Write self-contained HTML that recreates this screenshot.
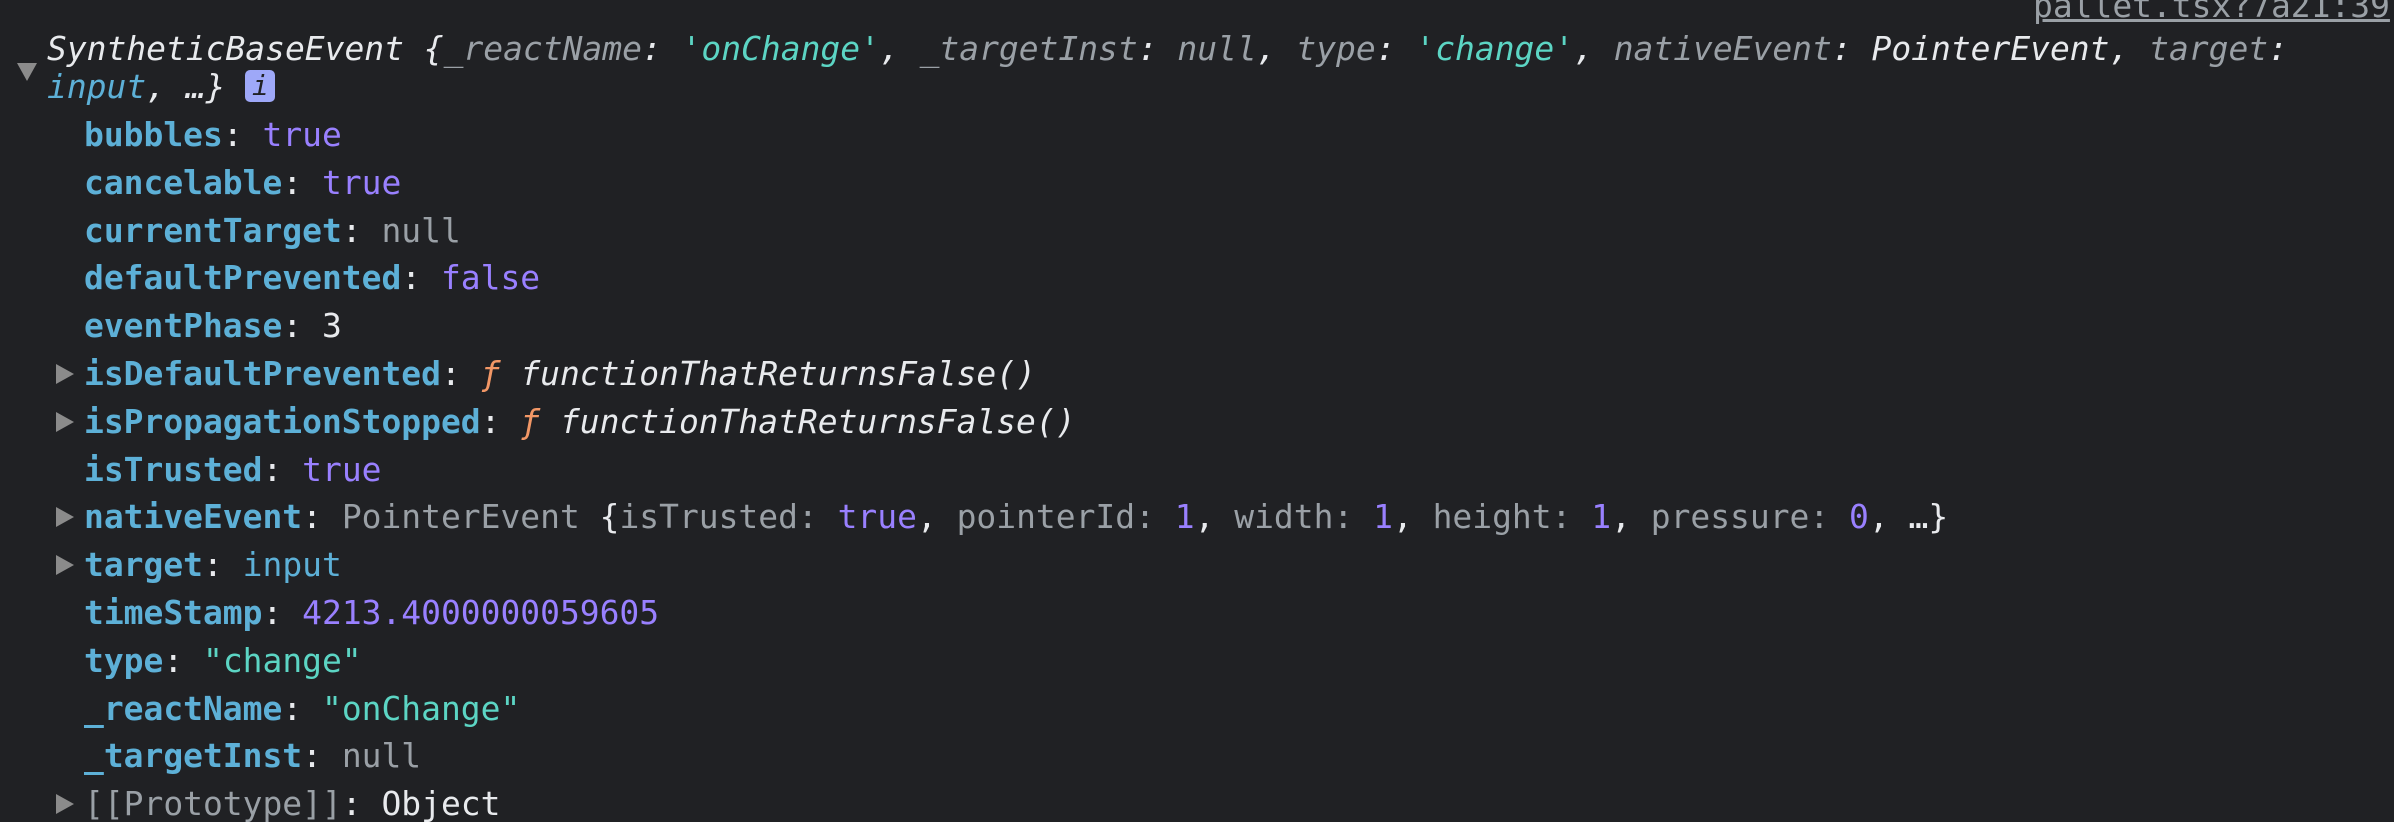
<!DOCTYPE html>
<html><head><meta charset="utf-8"><style>
html,body{margin:0;padding:0;background:#202124;width:2394px;height:822px;overflow:hidden}
body{font-family:"DejaVu Sans Mono","Liberation Mono",monospace;font-size:32.95px;color:#e8eaed;position:relative}
.hdr{position:absolute;left:47px;top:30px;line-height:38px;font-style:italic;white-space:pre}
.row{position:absolute;left:84px;height:47.8px;line-height:47.8px;white-space:pre}
.k{color:#5db0d7;font-weight:bold}
.n{color:#9980ff}
.s{color:#5cd5c4}
.g{color:#9aa0a6}
.f{color:#f29766;font-style:italic}
.it{font-style:italic}
.tri{position:absolute;left:56px;width:0;height:0;border-top:10px solid transparent;border-bottom:10px solid transparent;border-left:18px solid #8b8b8b}
.down{position:absolute;left:17px;top:63px;width:0;height:0;border-left:10px solid transparent;border-right:10px solid transparent;border-top:18px solid #8b8b8b}
.info{display:inline-block;width:30px;height:32px;background:#9ea8f8;border-radius:5px;color:#202124;text-align:center;line-height:32px;font-size:28px;vertical-align:middle;margin-top:-6px}
.link{position:absolute;left:2033px;top:-12px;line-height:36px;color:#9aa0a6;text-decoration:underline;white-space:pre}
</style></head><body>
<div class="link">pallet.tsx?7a21:39</div>
<div class="down"></div>
<div class="hdr">SyntheticBaseEvent {<span class="g">_reactName</span>: <span class="s">'onChange'</span>, <span class="g">_targetInst</span>: <span class="g">null</span>, <span class="g">type</span>: <span class="s">'change'</span>, <span class="g">nativeEvent</span>: PointerEvent, <span class="g">target</span>:
<span style="color:#5db0d7">input</span>, …} <span class="info">i</span></div>

<div class="row" style="top:111px"><span class="k">bubbles</span>: <span class="n">true</span></div>
<div class="row" style="top:159px"><span class="k">cancelable</span>: <span class="n">true</span></div>
<div class="row" style="top:207px"><span class="k">currentTarget</span>: <span class="g">null</span></div>
<div class="row" style="top:254px"><span class="k">defaultPrevented</span>: <span class="n">false</span></div>
<div class="row" style="top:302px"><span class="k">eventPhase</span>: 3</div>
<div class="tri" style="top:364px"></div>
<div class="row" style="top:350px"><span class="k">isDefaultPrevented</span>: <span class="f">ƒ</span> <span class="it">functionThatReturnsFalse()</span></div>
<div class="tri" style="top:412px"></div>
<div class="row" style="top:398px"><span class="k">isPropagationStopped</span>: <span class="f">ƒ</span> <span class="it">functionThatReturnsFalse()</span></div>
<div class="row" style="top:446px"><span class="k">isTrusted</span>: <span class="n">true</span></div>
<div class="tri" style="top:507px"></div>
<div class="row" style="top:493px"><span class="k">nativeEvent</span>: <span class="g">PointerEvent</span> {<span class="g">isTrusted: </span><span class="n">true</span>, <span class="g">pointerId: </span><span class="n">1</span>, <span class="g">width: </span><span class="n">1</span>, <span class="g">height: </span><span class="n">1</span>, <span class="g">pressure: </span><span class="n">0</span>, …}</div>
<div class="tri" style="top:555px"></div>
<div class="row" style="top:541px"><span class="k">target</span>: <span style="color:#5db0d7">input</span></div>
<div class="row" style="top:589px"><span class="k">timeStamp</span>: <span class="n">4213.4000000059605</span></div>
<div class="row" style="top:637px"><span class="k">type</span>: <span class="s">"change"</span></div>
<div class="row" style="top:685px"><span class="k">_reactName</span>: <span class="s">"onChange"</span></div>
<div class="row" style="top:732px"><span class="k">_targetInst</span>: <span class="g">null</span></div>
<div class="tri" style="top:794px"></div>
<div class="row" style="top:780px"><span class="g">[[Prototype]]</span>: Object</div>
</body></html>
